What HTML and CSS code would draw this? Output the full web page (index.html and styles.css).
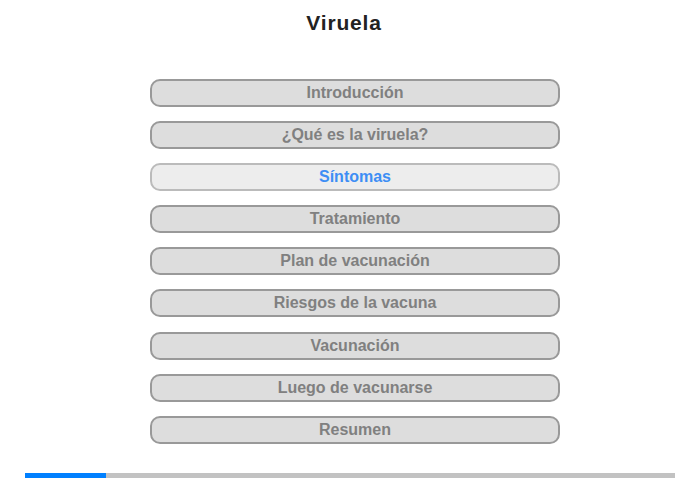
FILE: index.html
```html
<!DOCTYPE html>
<html lang="es">
<head>
  <meta charset="UTF-8">
  <meta name="viewport" content="width=device-width, initial-scale=1.0">
  <title>Viruela</title>
  <link rel="stylesheet" href="styles.css">
</head>
<body>
  <div class="page">
    <h1>Viruela</h1>
    <div class="menu">
      <button class="item">Introducción</button>
      <button class="item">¿Qué es la viruela?</button>
      <button class="item active">Síntomas</button>
      <button class="item">Tratamiento</button>
      <button class="item">Plan de vacunación</button>
      <button class="item">Riesgos de la vacuna</button>
      <button class="item">Vacunación</button>
      <button class="item">Luego de vacunarse</button>
      <button class="item">Resumen</button>
    </div>
    <div class="progress">
      <div class="progress-fill" style="width: 12.5%"></div>
    </div>
  </div>
</body>
</html>
```

FILE: styles.css
```css
body {
  margin: 0;
  font-family: "Liberation Sans", Arial, sans-serif;
  background-color: #fff;
}

.page {
  width: 700px;
  height: 480px;
  display: flex;
  flex-direction: column;
  align-items: center;
}

h1 {
  margin: 11px 12px 0 0;
  font-size: 21px;
  line-height: 24px;
  letter-spacing: 0.8px;
  font-weight: bold;
  color: #222;
}

.menu {
  margin: 44px 0 0 10px;
  display: flex;
  flex-direction: column;
  gap: 14.1px;
}

.item {
  width: 410px;
  height: 28px;
  padding: 0;
  background-color: #dddddd;
  border: 2px solid #999;
  border-radius: 10px;
  font-family: "Liberation Sans", Arial, sans-serif;
  font-size: 16px;
  font-weight: bold;
  color: #808080;
  cursor: pointer;
}

.item.active {
  background-color: #ededed;
  border-color: #bbb;
  color: #3d8ef5;
}

.progress {
  margin-top: 29px;
  width: 650px;
  height: 5px;
  background-color: #c2c2c2;
}

.progress-fill {
  height: 100%;
  background-color: #0080ff;
}
```
